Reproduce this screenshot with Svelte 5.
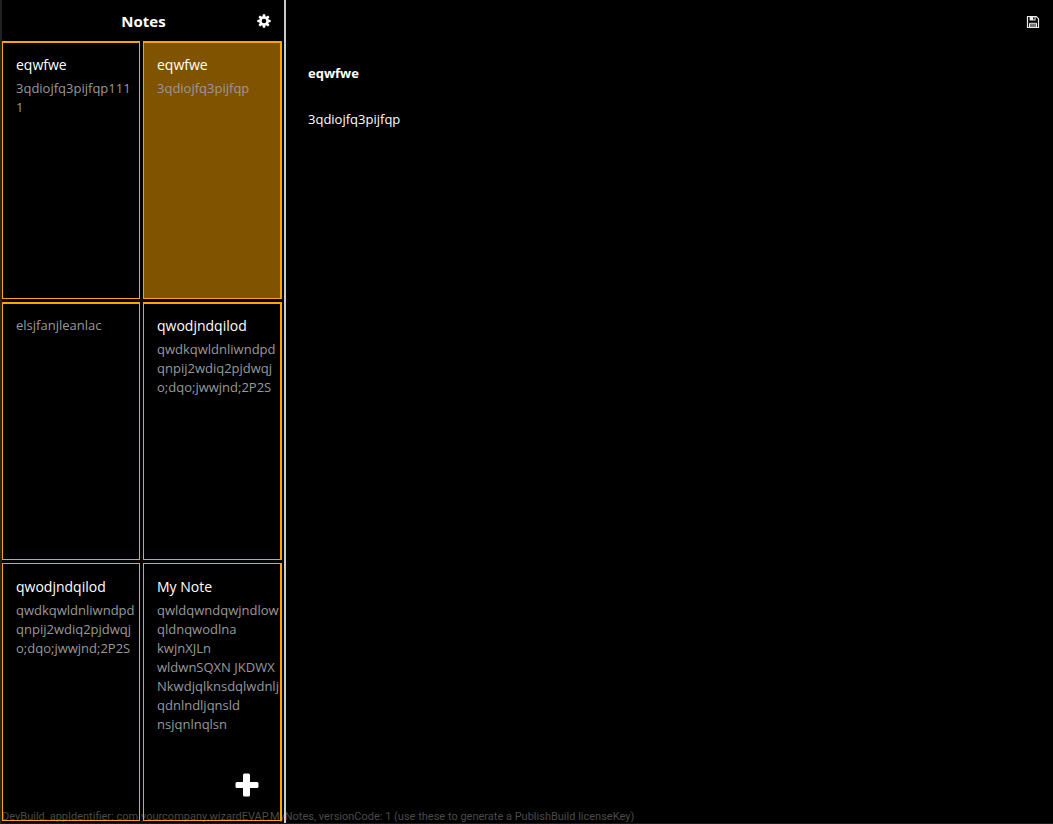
<script>
  const notes = [
    { title: 'eqwfwe', lines: ['3qdiojfq3pijfqp111', '1'] },
    { title: 'eqwfwe', lines: ['3qdiojfq3pijfqp'] },
    { title: '', lines: ['elsjfanjleanlac'] },
    { title: 'qwodjndqilod', lines: ['qwdkqwldnliwndpd', 'qnpij2wdiq2pjdwqj', 'o;dqo;jwwjnd;2P2S'] },
    { title: 'qwodjndqilod', lines: ['qwdkqwldnliwndpd', 'qnpij2wdiq2pjdwqj', 'o;dqo;jwwjnd;2P2S'] },
    {
      title: 'My Note',
      lines: ['qwldqwndqwjndlow', 'qldnqwodlna', 'kwjnXJLn', 'wldwnSQXN JKDWX', 'Nkwdjqlknsdqlwdnlj', 'qdnlndljqnsld', 'nsjqnlnqlsn']
    }
  ];
  let selected = $state(1);
  let heading = $state(notes[1].title);
  let content = $state(notes[1].lines.join('\n'));

  function open(i) {
    selected = i;
    heading = notes[i].title;
    content = notes[i].lines.join('\n');
  }
</script>

<div class="window">
  <aside class="sidebar">
    <header class="bar">
      <h1>Notes</h1>
      <button class="icon settings" aria-label="Settings">
        <svg width="14" height="14" viewBox="0 0 14 14" aria-hidden="true">
          <g fill="#fff">
            {#each [0, 45, 90, 135] as angle}
              <path d="M5.9 0.3h2.2l0.6 3v7.4l-0.6 3H5.9l-0.6-3V3.3z" transform="rotate({angle} 7 7)" />
            {/each}
            <circle cx="7" cy="7" r="4.7" />
          </g>
          <circle cx="7" cy="7" r="2.3" fill="#000" />
        </svg>
      </button>
    </header>
    <div class="grid">
      {#each notes as note, i}
        <button class="card" class:selected={i === selected} class:thick={i < 4} class:last={i % 2 === 1} onclick={() => open(i)}>
          {#if note.title}<span class="title">{note.title}</span>{/if}
          <span class="body">{note.lines.join('\n')}</span>
        </button>
      {/each}
    </div>
    <button class="icon add" aria-label="Add note">
      <svg width="24" height="24" viewBox="0 0 24 24" aria-hidden="true">
        <path d="M9.5 0.5h4a1.5 1.5 0 0 1 1.5 1.5v7h7a1.5 1.5 0 0 1 1.5 1.5v3a1.5 1.5 0 0 1-1.5 1.5h-7v7a1.5 1.5 0 0 1-1.5 1.5h-4a1.5 1.5 0 0 1-1.5-1.5v-7h-6a1.5 1.5 0 0 1-1.5-1.5v-3a1.5 1.5 0 0 1 1.5-1.5h6v-7a1.5 1.5 0 0 1 1.5-1.5z" fill="#fff" />
      </svg>
    </button>
  </aside>

  <main class="editor">
    <div class="tools">
      <button class="icon" aria-label="Save">
        <svg width="14" height="14" viewBox="0 0 14 14" fill="none" stroke="#eee" aria-hidden="true">
          <path d="M1.5 1.5h8.8l2.2 2.2v8.8h-11z" stroke-width="1.2" />
          <path d="M3.6 1.5h6v4h-6z" fill="#eee" stroke="none" />
          <path d="M7.2 2.2h1.4v2.3h-1.4z" fill="#000" stroke="none" />
          <path d="M3.5 12.5v-4.2h7v4.2" />
          <path d="M4 9h6v3H4z" fill="#777" stroke="none" />
        </svg>
      </button>
    </div>
    <input class="heading" aria-label="Note title" bind:value={heading} />
    <textarea class="content" aria-label="Note text" spellcheck="false" bind:value={content}></textarea>
  </main>

  <p class="build">DevBuild, appIdentifier: com.yourcompany.wizardEVAP.MyNotes, versionCode: 1 (use these to generate a PublishBuild licenseKey)</p>
</div>

<style>
  :global(body) {
    margin: 0;
    background: #000;
  }
  .window {
    position: relative;
    display: flex;
    box-sizing: border-box;
    height: 100vh;
    overflow: hidden;
    border-left: 2px solid #222;
    border-bottom: 1px solid #1c191c;
    background: #000;
    color: #fff;
    font-family: "Segoe UI", "Open Sans", "Noto Sans", sans-serif;
    font-size: 13px;
  }
  button {
    margin: 0;
    padding: 0;
    border: 0;
    background: none;
    color: inherit;
    font: inherit;
    text-align: left;
    cursor: pointer;
  }
  .icon {
    display: flex;
  }
  .sidebar {
    position: relative;
    z-index: 1;
    display: flex;
    flex-direction: column;
    flex: 0 0 284px;
    box-sizing: border-box;
    padding: 0 2px 2px 0;
    border-right: 2px solid #ccc;
  }
  .bar {
    display: grid;
    grid-template-columns: 1fr auto 1fr;
    align-items: center;
    height: 42px;
    margin-bottom: -1px;
  }
  h1 {
    grid-column: 2;
    margin: 0;
    padding-left: 3px;
    font-size: 15px;
    line-height: 20px;
  }
  .settings {
    justify-self: end;
    margin-right: 11px;
  }
  .grid {
    display: grid;
    flex: 1;
    grid-template-columns: 138px 1fr;
    grid-auto-rows: 1fr;
    gap: 3px;
    min-height: 0;
  }
  .card {
    display: flex;
    flex-direction: column;
    gap: 4px;
    min-width: 0;
    min-height: 0;
    overflow: hidden;
    padding: 13px 0 0 13px;
    border: 1px solid #ffa500;
  }
  .card.thick {
    padding-top: 12px;
    border-top-width: 2px;
  }
  .card.last {
    border-right-width: 2px;
  }
  .card.selected {
    background: #805300;
  }
  .title {
    font-size: 14px;
    line-height: 20px;
  }
  .body {
    color: #999;
    line-height: 19px;
    white-space: pre;
  }
  .add {
    position: absolute;
    right: 25px;
    bottom: 26px;
  }
  .editor {
    display: flex;
    flex: 1;
    flex-direction: column;
    min-width: 0;
    padding: 0 13px 0 22px;
  }
  .tools {
    display: flex;
    align-items: center;
    justify-content: flex-end;
    height: 43px;
  }
  .heading,
  .content {
    padding: 0;
    border: 0;
    outline: 0;
    background: none;
    color: inherit;
    font: inherit;
    line-height: 20px;
  }
  .heading {
    height: 20px;
    margin-top: 20px;
    font-weight: 700;
  }
  .content {
    flex: 1;
    margin-top: 26px;
    resize: none;
  }
  .build {
    position: absolute;
    left: 0;
    bottom: -2px;
    margin: 0;
    color: #4a4a4a;
    font-family: "Segoe UI", Roboto, "Open Sans", sans-serif;
    font-size: 11px;
    line-height: 16px;
    white-space: nowrap;
    pointer-events: none;
  }
</style>
